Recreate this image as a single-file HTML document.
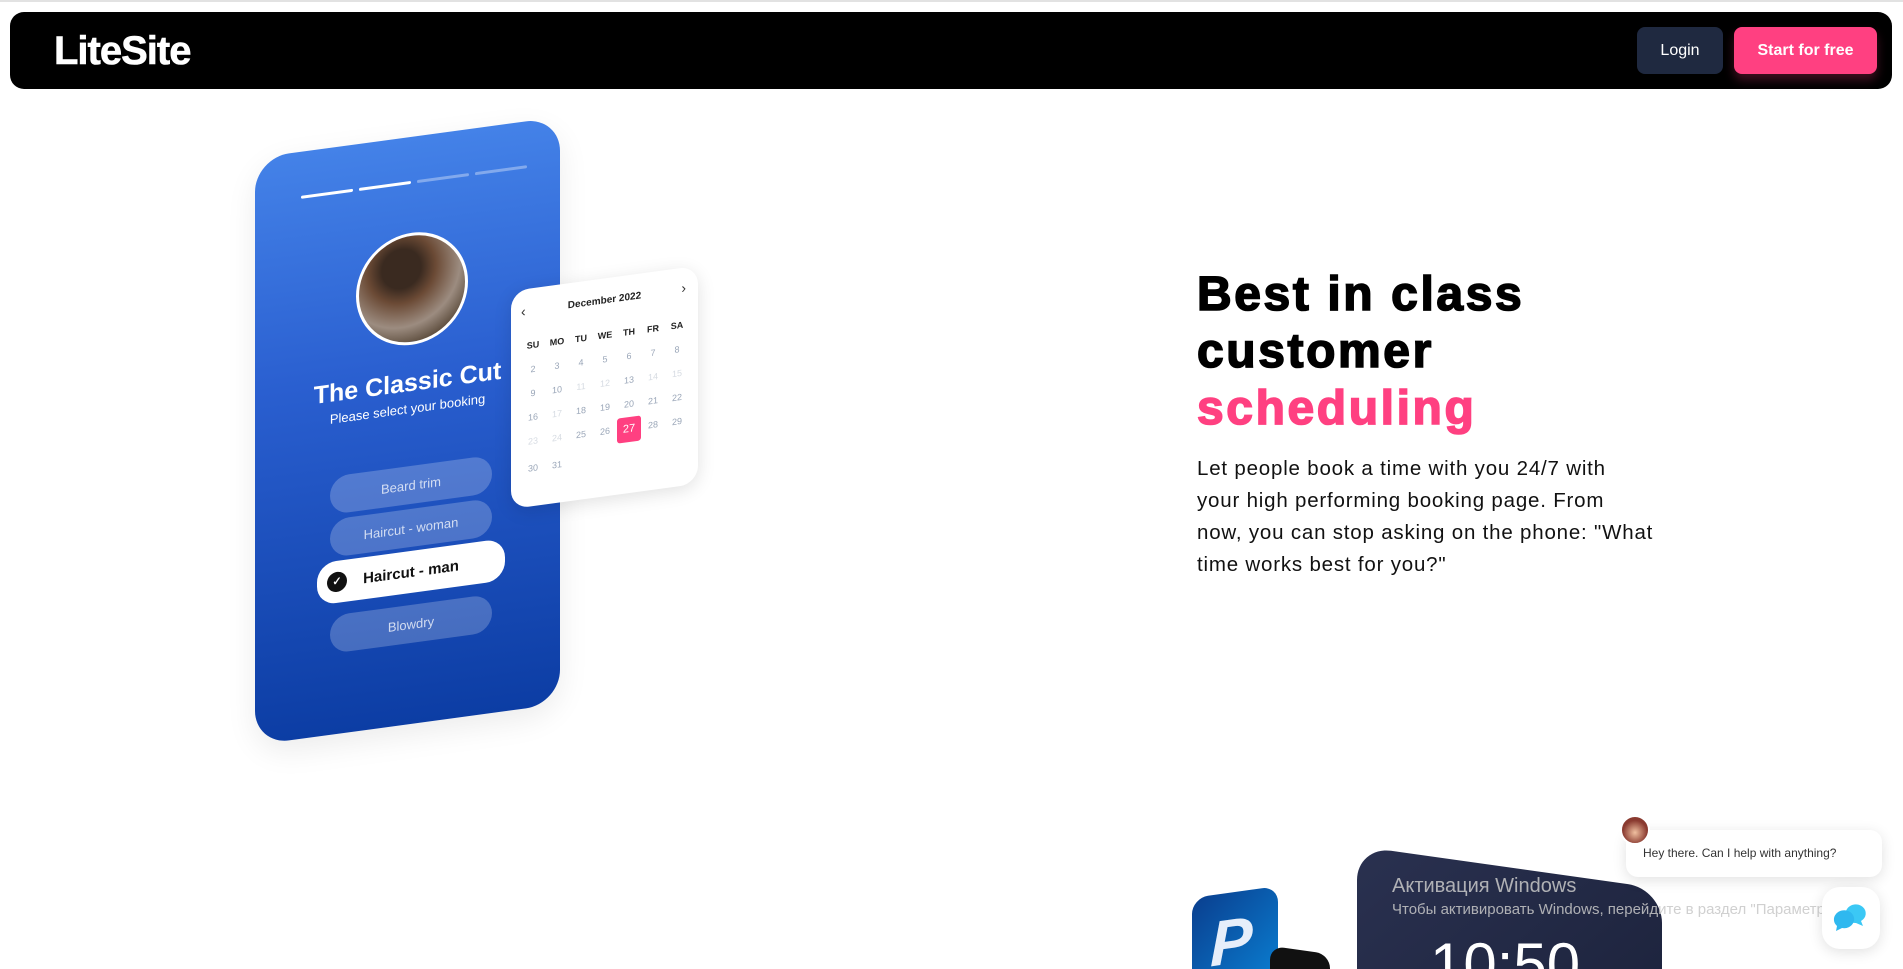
<!DOCTYPE html>
<html><head><meta charset="utf-8"><style>
*{margin:0;padding:0;box-sizing:border-box}
html,body{width:1903px;height:969px;overflow:hidden;background:#fff}
body{font-family:"Liberation Sans",sans-serif}
.page{position:relative;width:1903px;height:969px;overflow:hidden}
.topline{position:absolute;left:0;top:0;width:1903px;height:2px;background:#e2e2e2}
.nav{position:absolute;left:10px;top:12px;width:1882px;height:77px;background:#000;border-radius:14px}
.logo{position:absolute;left:54px;top:29px;color:#fff;font-weight:bold;font-size:40px;letter-spacing:-1px;-webkit-text-stroke:.6px #fff}
.btn{position:absolute;top:27px;height:47px;border-radius:8px;color:#fff;font-size:16px;display:flex;align-items:center;justify-content:center}
.login{left:1637px;width:86px;background:#1f2940}
.start{left:1734px;width:143px;background:#ff4081;font-weight:bold;box-shadow:0 6px 10px rgba(255,64,129,.25)}
h1{position:absolute;left:1197px;top:266px;font-size:48px;line-height:57px;font-weight:bold;letter-spacing:2.6px;color:#000;-webkit-text-stroke:1.6px #000;white-space:nowrap}
h1 span{color:#ff4081;-webkit-text-stroke:1.6px #ff4081}
p.lead{position:absolute;left:1197px;top:453px;font-size:20.5px;line-height:32px;color:#111;letter-spacing:.8px;white-space:nowrap}
.phone{position:absolute;left:255px;top:158px;width:305px;height:587px;border-radius:34px;background:linear-gradient(#4482e8,#2a5fd0 40%,#0c3da4);transform:skewY(-7.7deg);transform-origin:0 0;box-shadow:0 10px 30px rgba(0,0,0,.08)}
.bar{position:absolute;top:42px;height:3px;width:52px;background:#fff;border-radius:2px}
.av{position:absolute;left:101px;top:96px;width:112px;height:112px;border-radius:50%;border:3px solid #fff;background:radial-gradient(circle at 40% 30%,#3a2a20 20%,#6b4a35 35%,#9c8c80 60%,#5a4a3a 80%)}
.t1{position:absolute;left:0;width:305px;text-align:center;color:#fff}
.pill{position:absolute;left:75px;width:162px;height:38px;border-radius:19px;background:rgba(255,255,255,.22);color:rgba(255,255,255,.75);font-size:13px;display:flex;align-items:center;justify-content:center}
.cal{position:absolute;left:511px;top:291px;width:187px;height:218px;border-radius:18px;background:#fff;transform:skewY(-7.7deg);transform-origin:0 0;box-shadow:0 4px 18px rgba(0,0,0,.12);font-size:9px;color:#9aa6b8}
.cal .g{position:absolute;left:10px;top:52px;display:grid;grid-template-columns:repeat(7,24px);row-gap:14px;text-align:center}
.chat{position:absolute;left:1626px;top:830px;width:256px;height:47px;background:#fff;border-radius:12px;box-shadow:0 3px 14px rgba(0,0,0,.12);font-size:12px;color:#333;padding:16px 0 0 17px}
</style></head><body><div class="page">
<div class="topline"></div>
<div class="nav"></div>
<div class="logo">LiteSite</div>
<div class="btn login">Login</div>
<div class="btn start">Start for free</div>

<div class="phone">
 <div class="bar" style="left:46px;top:44px"></div>
 <div class="bar" style="left:104px;top:44px"></div>
 <div class="bar" style="left:162px;top:44px;opacity:.35"></div>
 <div class="bar" style="left:220px;top:44px;opacity:.35"></div>
 <div class="av"></div>
 <div class="t1" style="top:232px;font-size:25px;font-weight:bold">The Classic Cut</div>
 <div class="t1" style="top:264px;font-size:13px">Please select your booking</div>
 <div class="pill" style="top:329px">Beard trim</div>
 <div class="pill" style="top:372px">Haircut - woman</div>
 <div class="pill" style="top:414px;left:62px;width:188px;height:42px;background:#fff;color:#111;font-weight:bold;font-size:15px"><span style="position:absolute;left:10px;top:11px;width:20px;height:20px;border-radius:50%;background:#111;color:#fff;font-size:11px;text-align:center;line-height:20px">✓</span>Haircut - man</div>
 <div class="pill" style="top:468px">Blowdry</div>
</div>

<div class="cal">
 <div style="position:absolute;left:10px;top:14px;font-size:14px;color:#333">‹</div>
 <div style="position:absolute;left:0;width:187px;top:17px;text-align:center;font-weight:bold;color:#222;font-size:10px">December 2022</div>
 <div style="position:absolute;right:12px;top:12px;font-size:14px;color:#333">›</div>
 <div class="g">
  <b style="color:#222">SU</b><b style="color:#222">MO</b><b style="color:#222">TU</b><b style="color:#222">WE</b><b style="color:#222">TH</b><b style="color:#222">FR</b><b style="color:#222">SA</b>
  <span>2</span><span>3</span><span>4</span><span>5</span><span>6</span><span>7</span><span>8</span>
  <span>9</span><span>10</span><span style="opacity:.4">11</span><span style="opacity:.4">12</span><span>13</span><span style="opacity:.4">14</span><span style="opacity:.4">15</span>
  <span>16</span><span style="opacity:.4">17</span><span>18</span><span>19</span><span>20</span><span>21</span><span>22</span>
  <span style="opacity:.4">23</span><span style="opacity:.4">24</span><span>25</span><span>26</span><span style="background:#ff4081;color:#fff;font-size:11px;margin:-6px 0;line-height:25px;border-radius:3px">27</span><span>28</span><span>29</span>
  <span>30</span><span>31</span>
 </div>
</div>

<h1>Best in class<br>customer<br><span>scheduling</span></h1>
<p class="lead">Let people book a time with you 24/7 with<br>your high performing booking page. From<br>now, you can stop asking on the phone: "What<br>time works best for you?"</p>

<div style="position:absolute;left:1192px;top:892px;width:86px;height:90px;border-radius:16px;background:linear-gradient(135deg,#0a3f8f,#0a7dd0);transform:skewY(-8deg)"><span style="position:absolute;left:18px;top:12px;font-size:64px;font-weight:bold;color:#e6eefa;font-style:italic">P</span></div>
<div style="position:absolute;left:1270px;top:950px;width:60px;height:40px;border-radius:14px;background:#111;transform:skewY(8deg)"></div>
<div style="position:absolute;left:1357px;top:846px;width:305px;height:400px;border-radius:34px;background:linear-gradient(135deg,#2a3150,#141a30);transform:skewY(8deg);transform-origin:0 0"></div>
<div style="position:absolute;left:1430px;top:930px;color:#fff;font-size:60px;font-weight:300">10:50</div>
<div style="position:absolute;left:1392px;top:875px;color:rgba(200,200,200,.85);font-size:20px">Активация Windows</div>
<div style="position:absolute;left:1392px;top:901px;color:rgba(200,200,200,.85);font-size:15px">Чтобы активировать Windows, перейдите в раздел "Параметры".</div>

<div class="chat">Hey there. Can I help with anything?</div>
<div style="position:absolute;left:1620px;top:815px;width:30px;height:30px;border-radius:50%;background:radial-gradient(circle at 50% 60%,#f0c0a0,#8a3a30 60%);border:2px solid #fff"></div>
<div style="position:absolute;left:1822px;top:887px;width:58px;height:62px;border-radius:18px;background:#fff;box-shadow:0 3px 14px rgba(0,0,0,.12)">
 <svg width="58" height="62" viewBox="0 0 58 62"><path d="M25 22a10 9 0 1 1 14 12l2 5-7-3a10 9 0 0 1-9-14z" fill="#3bc8f5"/><path d="M14 27a10 9 0 1 1 6 14l-6 3 1-5a10 9 0 0 1-1-12z" fill="#2fb8ef"/></svg>
</div>
</div></body></html>
